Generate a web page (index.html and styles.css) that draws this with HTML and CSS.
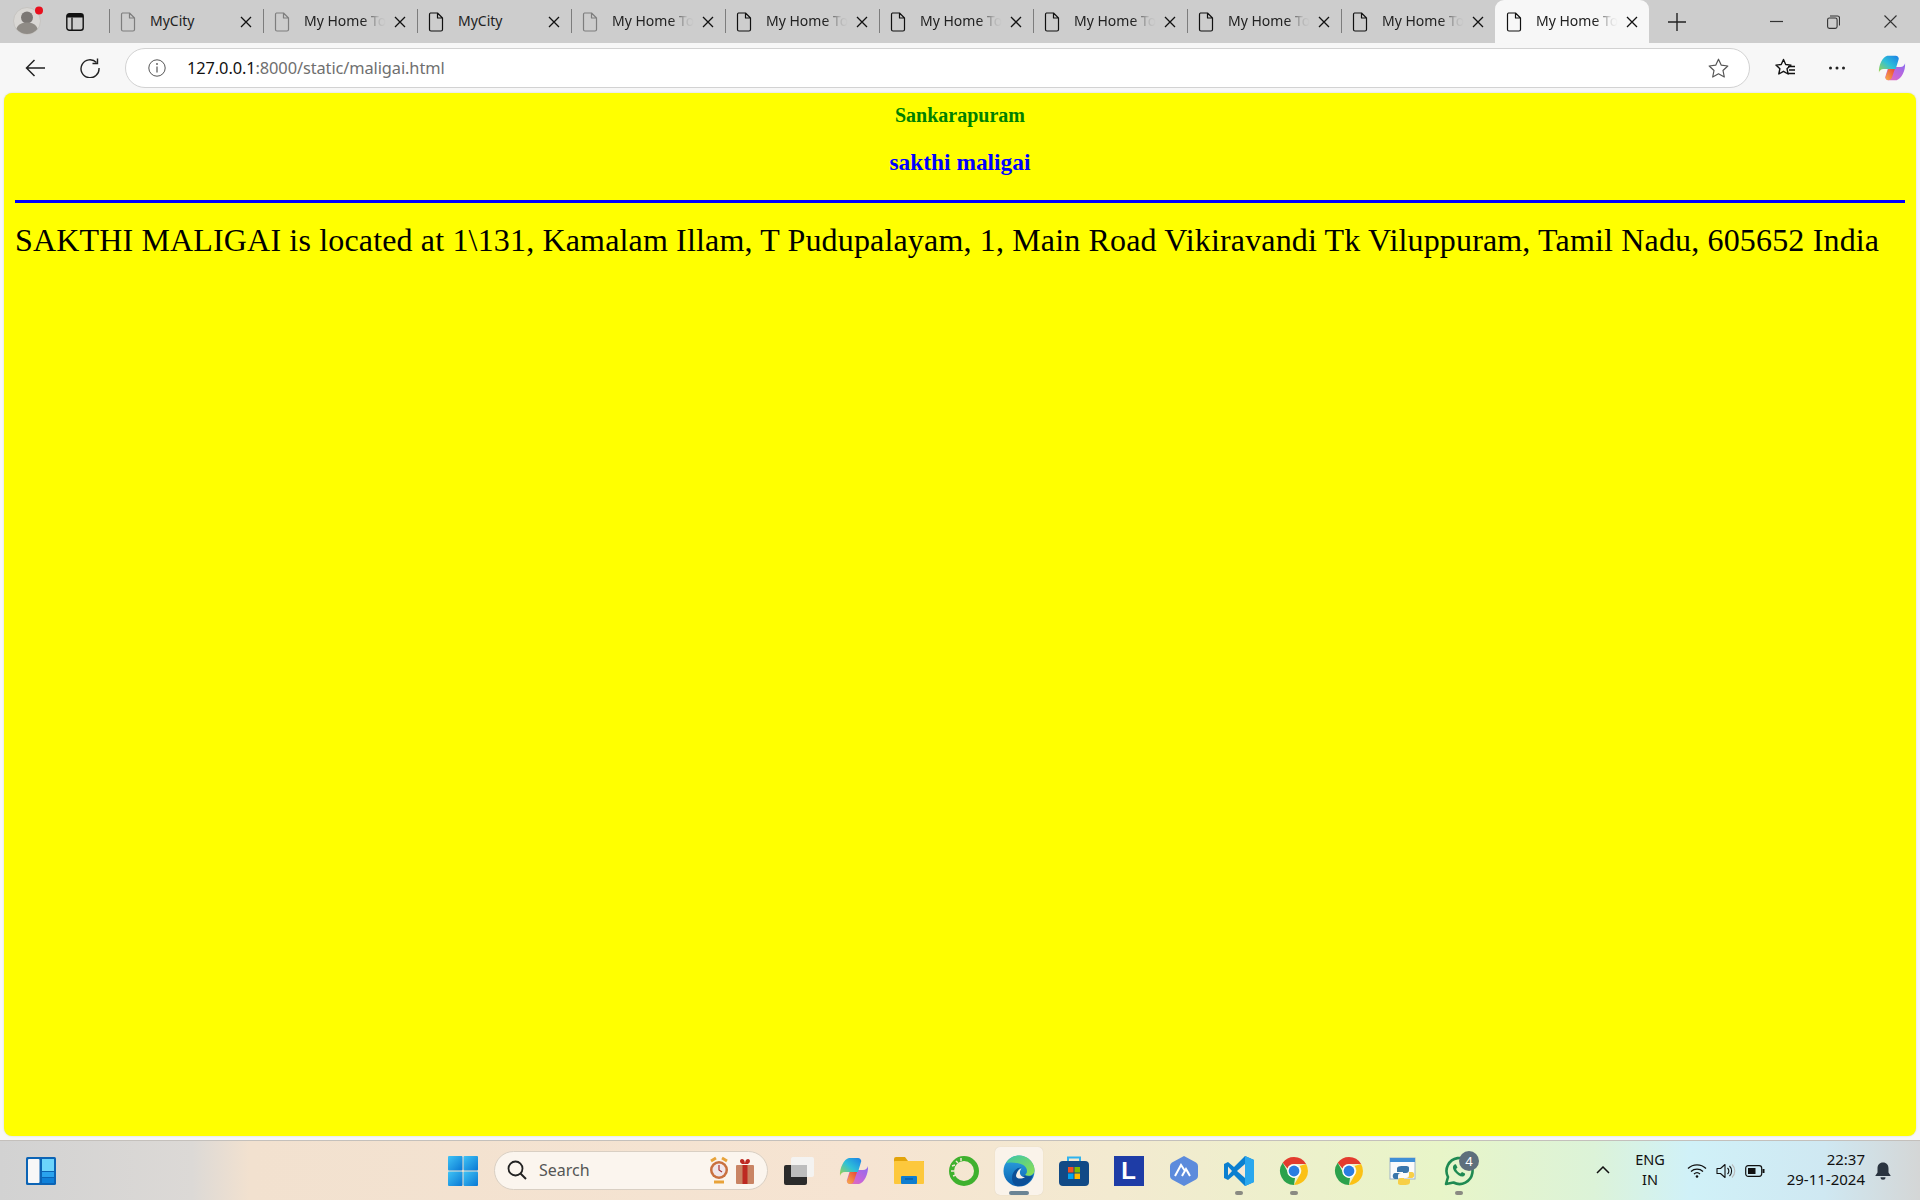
FILE: index.html
```html
<!DOCTYPE html>
<html lang="en">
<head>
<meta charset="utf-8">
<title>My Home Town</title>
<link rel="stylesheet" href="styles.css">
</head>
<body>
<svg class="defs" width="0" height="0" aria-hidden="true">
  <defs>
    <symbol id="doc" viewBox="0 0 16 20"><path d="M2.500 1h7L14.500 6v11.500a1.500 1.500 0 0 1-1.500 1.500H3a1.500 1.500 0 0 1-1.500-1.500V2.500A1.500 1.500 0 0 1 2.500 1zM9.500 1v5h5" fill="none" stroke="currentColor" stroke-width="1.200" stroke-linejoin="round"/></symbol>
    <symbol id="x" viewBox="0 0 12 12"><path d="M1 1l10 10M11 1L1 11" fill="none" stroke="currentColor" stroke-width="1.300"/></symbol>
    <linearGradient id="cp1" x1="1" y1="0" x2="0" y2="1"><stop offset="0" stop-color="#1b7fe6"/><stop offset=".5" stop-color="#2fc0d8"/><stop offset="1" stop-color="#a6d544"/></linearGradient>
    <linearGradient id="cp2" x1="1" y1="0" x2="0" y2="1"><stop offset="0" stop-color="#8a6cf0"/><stop offset=".6" stop-color="#c865d8"/><stop offset="1" stop-color="#ee6fa8"/></linearGradient>
    <linearGradient id="cp3" x1="0" y1="1" x2="1" y2="0"><stop offset="0" stop-color="#f8b04a"/><stop offset="1" stop-color="#e8453a"/></linearGradient>
    <symbol id="copilot" viewBox="0 0 30 30">
      <path d="M20 28h-9c-1.800 0-2.800-1-3.300-3L11 14h13c3 0 4.500-2 5-4 .6 8-4 17-9 18z" fill="url(#cp2)"/>
      <path d="M8 25.500L11 16h7l-2.800 8.500C14.500 27 13 28 11 28c-1.700 0-2.700-1-3-2.500z" fill="url(#cp3)"/>
      <path d="M10 2h9c1.800 0 2.800 1 3.300 3L19 16H6c-3 0-4.500 2-5 4C.4 12 5 3 10 2z" fill="url(#cp1)"/>
    </symbol>
    <linearGradient id="edgeA" x1="0" y1="0" x2="1" y2="1"><stop offset="0" stop-color="#3bc6a8"/><stop offset="1" stop-color="#8fe04f"/></linearGradient>
    <linearGradient id="edgeB" x1="0" y1="0" x2="0" y2="1"><stop offset="0" stop-color="#2fa8e4"/><stop offset="1" stop-color="#0a5fb0"/></linearGradient>
    <linearGradient id="winL" x1="0" y1="0" x2="1" y2="1"><stop offset="0" stop-color="#3fc3f5"/><stop offset="1" stop-color="#0a78d4"/></linearGradient>
    <symbol id="chrome" viewBox="0 0 30 30">
      <path d="M15 1a14 14 0 0 1 12.100 7H15a7 7 0 0 0-6.500 4.400L3.700 6.800A14 14 0 0 1 15 1z" fill="#e33b2e"/>
      <path d="M27.100 8A14 14 0 0 1 15 29l6-10.500A7 7 0 0 0 20.500 10z" fill="#fbc116"/>
      <path d="M15 29A14 14 0 0 1 3.700 6.800L9.700 17.500A7 7 0 0 0 16 22z" fill="#2ba24c"/>
      <circle cx="15" cy="15" r="6.800" fill="#fff"/><circle cx="15" cy="15" r="5.400" fill="#2a7de1"/>
    </symbol>
  </defs>
</svg>

<div class="tabstrip">
  <div class="profile">
    <svg width="36" height="36" viewBox="0 0 36 36"><circle cx="17" cy="19" r="13.500" fill="#d9d7d4" stroke="#c6c4c1"/><circle cx="17" cy="15.500" r="6" fill="#7b7774"/><path d="M6.500 27c1-5 6-6.500 10.500-6.500S26.500 22 27.500 27a13.500 13.500 0 0 1-21 0z" fill="#8f8b86"/><circle cx="29" cy="8.500" r="4" fill="#e8101e"/></svg>
  </div>
  <div class="collections">
    <svg width="18" height="18" viewBox="0 0 18 18"><rect x=".8" y=".8" width="16.400" height="16.400" rx="2.500" fill="none" stroke="#111" stroke-width="1.400"/><path d="M1 1h16v3.500H1z" fill="#111"/><path d="M6 4.500v12.500" stroke="#111" stroke-width="1.300"/></svg>
  </div>
  <div class="tab"><svg class="tab-icon dim"><use href="#doc"/></svg><span class="tab-title">MyCity</span><svg class="tab-x"><use href="#x"/></svg></div>
  <div class="tab"><svg class="tab-icon dim"><use href="#doc"/></svg><span class="tab-title fade">My Home To</span><svg class="tab-x"><use href="#x"/></svg></div>
  <div class="tab"><svg class="tab-icon"><use href="#doc"/></svg><span class="tab-title">MyCity</span><svg class="tab-x"><use href="#x"/></svg></div>
  <div class="tab"><svg class="tab-icon dim"><use href="#doc"/></svg><span class="tab-title fade">My Home To</span><svg class="tab-x"><use href="#x"/></svg></div>
  <div class="tab"><svg class="tab-icon"><use href="#doc"/></svg><span class="tab-title fade">My Home To</span><svg class="tab-x"><use href="#x"/></svg></div>
  <div class="tab"><svg class="tab-icon"><use href="#doc"/></svg><span class="tab-title fade">My Home To</span><svg class="tab-x"><use href="#x"/></svg></div>
  <div class="tab"><svg class="tab-icon"><use href="#doc"/></svg><span class="tab-title fade">My Home To</span><svg class="tab-x"><use href="#x"/></svg></div>
  <div class="tab"><svg class="tab-icon"><use href="#doc"/></svg><span class="tab-title fade">My Home To</span><svg class="tab-x"><use href="#x"/></svg></div>
  <div class="tab"><svg class="tab-icon"><use href="#doc"/></svg><span class="tab-title fade">My Home To</span><svg class="tab-x"><use href="#x"/></svg></div>
  <div class="tab active"><svg class="tab-icon"><use href="#doc"/></svg><span class="tab-title fade">My Home To</span><svg class="tab-x"><use href="#x"/></svg></div>
  <div class="newtab"><svg width="18" height="18" viewBox="0 0 18 18"><path d="M9 0v18M0 9h18" stroke="#222" stroke-width="1.400"/></svg></div>
  <div class="winctl">
    <svg width="13" height="13" viewBox="0 0 13 13"><path d="M0 6.500h13" stroke="#333" stroke-width="1.200"/></svg>
    <svg width="13" height="14" viewBox="0 0 13 14"><rect x=".6" y="3" width="9.500" height="10.400" rx="1.800" fill="none" stroke="#333" stroke-width="1.100"/><path d="M3 1h7.500A2 2 0 0 1 12.500 3v7.500" fill="none" stroke="#333" stroke-width="1.100"/></svg>
    <svg width="13" height="13" viewBox="0 0 13 13"><path d="M.5.500l12 12M12.500.500l-12 12" stroke="#333" stroke-width="1.100"/></svg>
  </div>
</div>

<div class="toolbar">
  <button class="tool back" aria-label="Back"><svg width="20" height="18" viewBox="0 0 20 18"><path d="M9.500 1L1.500 9l8 8M1.500 9H20" fill="none" stroke="#222" stroke-width="1.500"/></svg></button>
  <button class="tool reload" aria-label="Refresh"><svg width="20" height="20" viewBox="0 0 20 20"><path d="M16.500 4.500A9 9 0 1 0 19 10" fill="none" stroke="#222" stroke-width="1.400"/><path d="M17.500 .5v5h-5" fill="none" stroke="#222" stroke-width="1.400"/></svg></button>
  <div class="address">
    <svg class="info" width="18" height="18" viewBox="0 0 18 18"><circle cx="9" cy="9" r="8.200" fill="none" stroke="#555" stroke-width="1"/><path d="M9 7.500v6" stroke="#555" stroke-width="1.200"/><circle cx="9" cy="5" r=".9" fill="#555"/></svg>
    <span class="url"><span class="host">127.0.0.1</span>:8000/static/maligai.html</span>
    <svg class="star" width="21" height="20" viewBox="0 0 21 20"><path d="M10.500 1.200l2.800 6 6.500.8-4.800 4.500 1.300 6.500-5.800-3.200-5.800 3.200 1.300-6.500L1.200 8l6.500-.8z" fill="none" stroke="#555" stroke-width="1.200" stroke-linejoin="round"/></svg>
  </div>
  <div class="toolright">
    <svg width="21" height="21" viewBox="0 0 21 21"><path d="M8.500 1.500l2.200 5 5.300.6-4 3.600 1.100 5.300-4.600-2.700-4.700 2.700 1.100-5.300-4-3.600 5.300-.6z" fill="none" stroke="#111" stroke-width="1.400" stroke-linejoin="round"/><path d="M13 8.500h7M14 12h6M13 15.500h7" stroke="#111" stroke-width="1.400"/></svg>
    <svg width="18" height="4" viewBox="0 0 18 4"><circle cx="2.500" cy="2" r="1.500" fill="#222"/><circle cx="9" cy="2" r="1.500" fill="#222"/><circle cx="15.500" cy="2" r="1.500" fill="#222"/></svg>
    <svg width="28" height="28"><use href="#copilot"/></svg>
  </div>
</div>

<main class="page">
  <h3 class="city">Sankarapuram</h3>
  <h2 class="shop">sakthi maligai</h2>
  <hr class="rule">
  <p class="address-text">SAKTHI MALIGAI is located at 1\131, Kamalam Illam, T Pudupalayam, 1, Main Road Vikiravandi Tk Viluppuram, Tamil Nadu, 605652 India</p>
</main>

<footer class="taskbar">
  <div class="widgets">
    <svg width="30" height="28" viewBox="0 0 30 28"><rect width="30" height="28" rx="1.500" fill="#0c64b5"/><rect x="2" y="2" width="11.500" height="24" rx="1" fill="#f7f7f7"/><rect x="16" y="2" width="12" height="12" fill="#6cd4fb"/><rect x="16" y="15" width="12" height="5" fill="#2aa3ee"/><rect x="16" y="21" width="12" height="5" fill="#0f80d8"/></svg>
  </div>
  <div class="center">
    <svg class="start" width="30" height="30" viewBox="0 0 30 30"><rect width="14.500" height="14.500" rx="1" fill="url(#winL)"/><rect x="15.500" width="14.500" height="14.500" rx="1" fill="url(#winL)"/><rect y="15.500" width="14.500" height="14.500" rx="1" fill="url(#winL)"/><rect x="15.500" y="15.500" width="14.500" height="14.500" rx="1" fill="url(#winL)"/></svg>
    <div class="search">
      <svg width="20" height="20" viewBox="0 0 20 20"><circle cx="8.500" cy="8.500" r="7" fill="none" stroke="#222" stroke-width="1.800"/><path d="M13.500 13.500L19 19" stroke="#222" stroke-width="2"/></svg>
      <span class="search-text">Search</span>
      <svg class="search-art" width="46" height="30" viewBox="0 0 46 30"><circle cx="10" cy="15" r="9" fill="#c9703f"/><circle cx="10" cy="15" r="6.500" fill="#f0e6ea"/><path d="M10 10v5l3 2" stroke="#a33" stroke-width="1.200" fill="none"/><path d="M2 6l5-3M18 6l-5-3" stroke="#e8a33a" stroke-width="3"/><path d="M5 27h10" stroke="#e8a33a" stroke-width="3"/><rect x="27" y="10" width="18" height="19" rx="1" fill="#c98464"/><rect x="33.500" y="10" width="5" height="19" fill="#bd2a22"/><path d="M36 9c-6 1-6-5-3-5s3 5 3 5 0-5 3-5 3 6-3 5z" fill="#bd2a22"/></svg>
    </div>
    <div class="app">
      <svg width="30" height="28" viewBox="0 0 30 28"><rect y="8" width="23" height="20" rx="2" fill="#2b2b2b"/><rect x="7" width="23" height="20" rx="2" fill="#f4f4f4" fill-opacity=".9"/><rect x="7" y="8" width="16" height="12" fill="#bdbdbd"/></svg>
    </div>
    <div class="app"><svg width="30" height="30"><use href="#copilot"/></svg></div>
    <div class="app">
      <svg width="30" height="27" viewBox="0 0 30 27"><path d="M0 2a2 2 0 0 1 2-2h9l3 4h16v4H0z" fill="#e3a40a"/><rect y="4" width="30" height="23" rx="1" fill="#fdc83c"/><rect x="7" y="19" width="16" height="8" rx="1" fill="#0f7ed0"/><path d="M11 22h8" stroke="#0a4f8f" stroke-width="1"/></svg>
    </div>
    <div class="app">
      <svg width="30" height="30" viewBox="0 0 30 30"><circle cx="15" cy="15" r="12.500" fill="none" stroke="#3fb12e" stroke-width="5"/><path d="M3 10l3-1M2 15l3 0M4 20l3-1M7 5l2 2M12 2l0 3" stroke="#f4e6d5" stroke-width="1.500"/></svg>
    </div>
    <div class="app current">
      <svg width="32" height="32" viewBox="0 0 32 32"><circle cx="16" cy="16" r="15.500" fill="url(#edgeB)"/><path d="M3 8C7 1 14 0 17 .5c8 .5 14.500 7 14.500 14.500 0 5-5 7-9.500 5 3-2 2.500-7-1-9.500C15 7 6 7 3 8z" fill="url(#edgeA)"/><path d="M22 20.500c2.500 1.200 6 1.200 8-.5-2 6-8 11.500-14 11-6-.3-8-6-6.500-11.500 1-4 5.500-7.500 9-7-3 1-4.500 3.500-4 6 .5 3.500 4.500 4 7.500 2z" fill="#0c4f97"/><path d="M13 21c.5-4 3-7 5.500-7.500-1 1-2 3-1.500 5 .5 2.500 3 4 5 3.500-3 2-8 2.500-9-1z" fill="#f6efe6"/></svg>
      <i class="pill wide"></i>
    </div>
    <div class="app">
      <svg width="30" height="30" viewBox="0 0 30 30"><path d="M9 6V1.500h12V6" fill="none" stroke="#2fb3ee" stroke-width="2"/><rect y="5" width="30" height="25" rx="4" fill="#114a86"/><rect x="9" y="11" width="5.500" height="5.500" fill="#f25022"/><rect x="15.500" y="11" width="5.500" height="5.500" fill="#7fba00"/><rect x="9" y="17.500" width="5.500" height="5.500" fill="#00a4ef"/><rect x="15.500" y="17.500" width="5.500" height="5.500" fill="#ffb900"/></svg>
    </div>
    <div class="app">
      <div class="letter">L</div>
    </div>
    <div class="app">
      <svg width="28" height="30" viewBox="0 0 28 30"><path d="M14 0l12 6.500q2 1 2 3.500v10q0 2.500-2 3.500L14 30 2 23.500Q0 22.500 0 20V10q0-2.500 2-3.500z" fill="#5c8bdc"/><path d="M5 20l6-11 4 6M12 20l4-7 3 5M20 20l-3-5" fill="none" stroke="#fff" stroke-width="2"/></svg>
    </div>
    <div class="app">
      <svg width="30" height="30" viewBox="0 0 30 30"><path d="M21 0l9 4v22l-9 4-11-11-6 5-4-2V8l4-2 6 5z" fill="#0a7fd0"/><path d="M21 0l9 4v22l-9 4z" fill="#2aa7ee"/><path d="M21 8L13 15l8 7z" fill="#f6e9d6"/><path d="M4 10.500L8 15l-4 4.500z" fill="#f6e9d6"/></svg>
      <i class="pill"></i>
    </div>
    <div class="app"><svg width="30" height="30"><use href="#chrome"/></svg><i class="pill"></i></div>
    <div class="app"><svg width="30" height="30"><use href="#chrome"/></svg></div>
    <div class="app">
      <svg width="30" height="30" viewBox="0 0 30 30"><rect x="1" y="2" width="25" height="21" fill="#fbfbfb" stroke="#9db4c8"/><rect x="1" y="2" width="25" height="4" fill="#3f8fd6"/><path d="M14 10c-5 0-6 1-6 3v3h6v1H6c-3 0-3 6 0 6h3v-3c0-2 1-3 3-3h5c2 0 3-1 3-3v-2c0-2-2-2-6-2z" fill="#3a76ab"/><path d="M15 29c5 0 6-1 6-3v-3h-6v-1h8c3 0 3-6 0-6h-3v3c0 2-1 3-3 3h-5c-2 0-3 1-3 3v2c0 2 2 2 6 2z" fill="#f7cf47"/></svg>
    </div>
    <div class="app">
      <svg width="30" height="30" viewBox="0 0 30 30"><path d="M2 28l2-7A13 13 0 1 1 9.500 26.500z" fill="none" stroke="#1f8a52" stroke-width="2.600" stroke-linejoin="round"/><path d="M10 9c-1.500 1.500-1.500 4 1 7s5.500 5 8 4.500c1.500-.5 2.500-2 2-3l-3-1.500-1.500 1.500c-2-.7-3.500-2.500-4.500-4.500l1.500-1.500-1.500-3c-1-.5-1.500 0-2 .5z" fill="#1f8a52"/></svg>
      <span class="badge">4</span>
      <i class="pill"></i>
    </div>
  </div>
  <div class="tray">
    <svg class="chev" width="14" height="8" viewBox="0 0 14 8"><path d="M1 7l6-6 6 6" fill="none" stroke="#111" stroke-width="1.500"/></svg>
    <div class="lang"><span>ENG</span><span>IN</span></div>
    <div class="status">
      <svg width="20" height="15" viewBox="0 0 20 15"><path d="M1 5.500a13 13 0 0 1 18 0M4 8.500a9 9 0 0 1 12 0M7 11a4.500 4.500 0 0 1 6 0" fill="none" stroke="#111" stroke-width="1.300"/><circle cx="10" cy="13.500" r="1.300" fill="#111"/></svg>
      <svg width="20" height="16" viewBox="0 0 20 16"><path d="M1 5.500h3.500L9 1.500v13l-4.500-4H1z" fill="none" stroke="#111" stroke-width="1.100" stroke-linejoin="round"/><path d="M11.500 5a4 4 0 0 1 0 6M13.500 3a7 7 0 0 1 0 10" fill="none" stroke="#111" stroke-width="1.100"/><path d="M16 1.500a9 9 0 0 1 0 13" fill="none" stroke="#bbb" stroke-width="1.100"/></svg>
      <svg width="20" height="12" viewBox="0 0 20 12"><rect x=".7" y=".7" width="16" height="10.600" rx="2.500" fill="none" stroke="#111" stroke-width="1.200"/><rect x="3" y="3" width="7.500" height="6" fill="#111"/><rect x="17.500" y="4" width="2" height="4" fill="#111"/></svg>
    </div>
    <div class="clock"><span>22:37</span><span>29-11-2024</span></div>
    <svg class="bell" width="16" height="18" viewBox="0 0 16 18"><path d="M8 .5c3.500 0 5.500 2.500 5.500 6v4l2.300 3.500H.2L2.500 10.500v-4C2.500 3 4.500.5 8 .5z" fill="#2a3440"/><path d="M5.500 15.200h5a2.500 2.500 0 0 1-5 0z" fill="#2a3440"/></svg>
  </div>
</footer>
</body>
</html>
```

FILE: styles.css
```css
* { box-sizing: border-box; }

html, body { height: 100%; }

body {
  margin: 0;
  height: 1200px;
  display: flex;
  flex-direction: column;
  background: #f7f7f7;
  font-family: "Noto Sans", "Open Sans", sans-serif;
  overflow: hidden;
}

.defs { position: absolute; }

/* tab strip */
.tabstrip {
  height: 43px;
  flex: none;
  display: flex;
  align-items: stretch;
  background: #cdcdcd;
  color: #222;
}

.profile {
  width: 57px;
  flex: none;
  display: flex;
  align-items: center;
  justify-content: flex-end;
  padding-right: 4px;
}

.profile svg { margin-top: -4px; margin-right: 7px; }

.collections {
  width: 52px;
  flex: none;
  display: flex;
  align-items: center;
  padding-left: 9px;
}

.tab {
  width: 154px;
  flex: none;
  display: flex;
  align-items: center;
  padding: 0 11px 0 11px;
  position: relative;
}

.tab::before {
  content: "";
  position: absolute;
  left: 0;
  top: 9px;
  height: 24px;
  width: 1px;
  background: #7d7d7d;
}

.tab.active {
  background: #f7f7f7;
  border-radius: 9px 9px 0 0;
}

.tab.active::before { display: none; }

.tab-icon {
  width: 16px;
  height: 20px;
  flex: none;
  color: #111;
}

.tab-icon.dim { color: #7e7e7e; }

.tab-title {
  flex: 1;
  min-width: 0;
  margin-left: 14px;
  margin-top: -3px;
  font-size: 14px;
  white-space: nowrap;
}

.tab-title.fade {
  -webkit-mask-image: linear-gradient(90deg, #000 72%, rgba(0, 0, 0, .15) 90%, transparent 100%);
  mask-image: linear-gradient(90deg, #000 72%, rgba(0, 0, 0, .15) 90%, transparent 100%);
}

.tab-x {
  width: 12px;
  height: 12px;
  margin-left: 8px;
  flex: none;
  color: #111;
}

.newtab {
  width: 44px;
  flex: none;
  display: flex;
  align-items: center;
  justify-content: center;
  margin-left: 6px;
}

.winctl {
  flex: 1;
  display: flex;
  align-items: center;
  justify-content: flex-end;
  gap: 44px;
  padding-right: 23px;
}

/* toolbar */
.toolbar {
  height: 50px;
  flex: none;
  display: flex;
  align-items: center;
  background: #f7f7f7;
}

.tool {
  width: 55px;
  height: 40px;
  flex: none;
  border: 0;
  padding: 0;
  background: none;
  display: flex;
  align-items: center;
  justify-content: center;
}

.back { margin-left: 7px; }

.reload { margin-right: 8px; }

.address {
  width: 1625px;
  height: 40px;
  flex: none;
  display: flex;
  align-items: center;
  background: #fff;
  border: 1px solid #d2d2d2;
  border-radius: 20px;
  padding: 0 20px 0 22px;
}

.url {
  flex: 1;
  margin-left: 21px;
  margin-top: -2px;
  font-size: 16.400px;
  color: #6f6f6f;
  letter-spacing: -.1px;
}

.host { color: #111; }

.toolright {
  flex: 1;
  display: flex;
  align-items: center;
  justify-content: space-between;
  padding: 0 14px 0 25px;
}

/* page */
.page {
  flex: 1;
  margin: 0 4px 4px;
  padding: 0 11px;
  background: #ff0;
  border-radius: 8px;
  color: #000;
  box-shadow: 0 0 2px rgba(0, 0, 0, .15);
  font-family: "Liberation Serif", "Times New Roman", serif;
  overflow: hidden;
}

.city {
  margin: 11px 0 0;
  text-align: center;
  font-size: 20px;
  line-height: 22px;
  color: #008000;
}

.shop {
  margin: 24px 0 0;
  text-align: center;
  font-size: 23.400px;
  line-height: 25px;
  color: #00f;
}

.rule {
  margin: 25px 0 0;
  height: 3px;
  border: 0;
  background: #00f;
}

.address-text {
  margin: 18px 0 0;
  font-size: 32px;
  line-height: 38px;
  letter-spacing: .16px;
  white-space: nowrap;
}

/* taskbar */
.taskbar {
  height: 60px;
  flex: none;
  display: flex;
  align-items: center;
  border-top: 1px solid #c4c0bc;
  background: linear-gradient(90deg, #d2d2d2 0, #dcd9d6 10%, #f2e1cf 13%, #f6e4d2 45%, #f3ead0 58%, #e8f5c8 75%, #dcf3d8 83%, #d0f1f8 88%, #cfe8f2 95%, #d4d6d6 100%);
  color: #111;
  font-family: "Noto Sans", "Open Sans", sans-serif;
}

.widgets {
  width: 448px;
  flex: none;
  padding-left: 26px;
  display: flex;
}

.center {
  display: flex;
  align-items: center;
}

.start { margin-right: 16px; }

.search {
  width: 274px;
  height: 39px;
  display: flex;
  align-items: center;
  padding: 0 14px 0 12px;
  background: #fbf5ee;
  border: 1px solid #d9cfc3;
  border-radius: 20px;
  margin-right: 3px;
  margin-top: -1px;
}

.search-text {
  flex: 1;
  margin-left: 12px;
  margin-top: -1px;
  font-size: 16px;
  color: #555;
}

.search-art { margin-right: -2px; }

.app {
  width: 55px;
  height: 48px;
  flex: none;
  display: flex;
  align-items: center;
  justify-content: center;
  position: relative;
}

.app.current {
  background: #faf3ea;
  border-radius: 5px;
  box-shadow: 0 0 1px rgba(0, 0, 0, .15);
  width: 48px;
  margin: 0 3.500px;
}

.pill {
  position: absolute;
  left: 50%;
  bottom: 0;
  width: 8px;
  height: 4px;
  margin-left: -4px;
  border-radius: 2px;
  background: #8a8a82;
}

.pill.wide {
  width: 20px;
  margin-left: -10px;
  background: #6b8494;
}

.letter {
  width: 30px;
  height: 30px;
  background: #1e3ca6;
  color: #fff;
  font: 700 24px/30px "Liberation Sans", Arial, sans-serif;
  text-align: center;
}

.badge {
  position: absolute;
  right: 7px;
  top: 4px;
  width: 20px;
  height: 20px;
  border-radius: 50%;
  background: #5e6f7c;
  color: #fff;
  font-size: 13px;
  line-height: 20px;
  text-align: center;
}

.tray {
  flex: 1;
  display: flex;
  align-items: center;
  padding-left: 110px;
}

.chev { margin-right: 21px; margin-top: -1px; }

.lang, .clock {
  display: flex;
  flex-direction: column;
  line-height: 20px;
  margin-top: -3px;
}

.lang { align-items: center; width: 38px; font-size: 14.500px; }

.status {
  display: flex;
  align-items: center;
  gap: 9px;
  margin-left: 18px;
}

.clock {
  align-items: flex-end;
  width: 98px;
  margin-left: 2px;
  font-size: 15px;
}

.bell { margin-left: 10px; }
```
